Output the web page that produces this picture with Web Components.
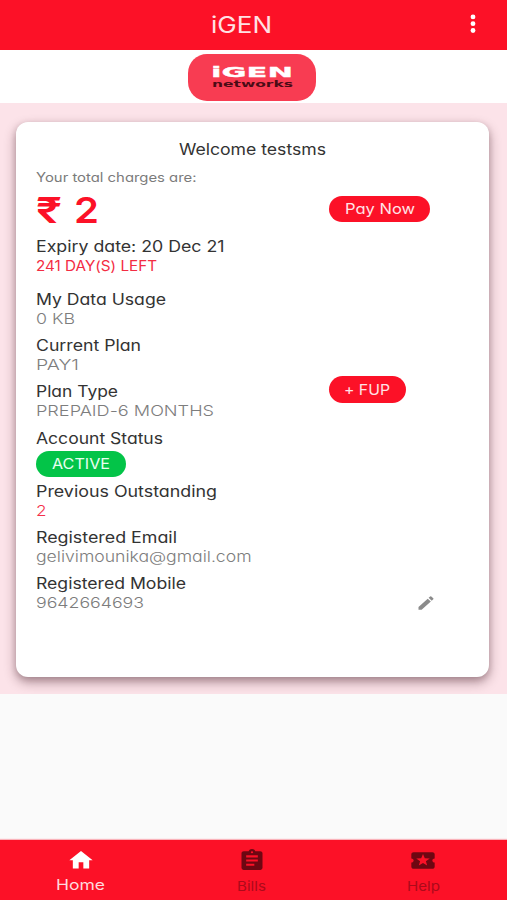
<!DOCTYPE html>
<html lang="en">
<head>
<meta charset="utf-8">
<title>iGEN</title>
<style>
html,body{margin:0;height:100%}
body{font-family:Inter,"Open Sans","Liberation Sans",sans-serif;font-feature-settings:"cv11" 1,"calt" 0;background:#fafafa;color:#333;overflow:hidden}
</style>
</head>
<body>
<igen-app></igen-app>
<script>
const define = (name, html, init) => customElements.define(name, class extends HTMLElement {
  connectedCallback() {
    if (this.shadowRoot) return;
    const root = this.attachShadow({mode: 'open'});
    root.innerHTML = html;
    if (init) init(this, root);
  }
});

/* One line of text widened to the width given in "w" */
define('wide-text', `<style>
:host{display:block;white-space:nowrap;line-height:19px;height:19px;font-size:15.4px}
span{display:inline-block;transform-origin:0 50%}
</style><span><slot></slot></span>`, (el, root) => {
  const w = +el.getAttribute('w');
  el.style.width = w + 'px';
  const s = root.querySelector('span');
  s.style.transform = `scaleX(${w / s.getBoundingClientRect().width})`;
});

define('pill-label', `<style>
:host{display:flex;align-items:center;justify-content:center;box-sizing:border-box;border-radius:14px;background:#fc1127;color:#ffe3e6}
</style><slot></slot>`);

define('info-field', `<style>
:host{display:block;margin-bottom:7.25px;color:#333}
.v{color:var(--value,#7d7d7d);font-weight:300;padding-top:1px}
::slotted([slot=value]){font-size:14.8px}
</style><slot></slot><div class="v"><slot name="value"></slot></div>`);

define('app-header', `<style>
:host{display:flex;align-items:center;height:50px;background:#fc1127;color:#ffe1e4;box-sizing:border-box;padding:0 29px 2px 211px;justify-content:space-between}
wide-text{font-size:22.5px}
svg{display:block}
</style><wide-text w="61">iGEN</wide-text>
<svg width="10" height="20" viewBox="0 0 10 20" fill="#fff"><circle cx="5" cy="2.9" r="2.4"/><circle cx="5" cy="9.7" r="2.4"/><circle cx="5" cy="16.5" r="2.4"/></svg>`);

define('brand-banner', `<style>
:host{display:flex;height:53px;background:#fff;box-sizing:border-box;padding:4px 0 2px 188px}
.logo{width:128px;height:47px;border-radius:19px;background:#f83c52;display:flex;flex-direction:column;align-items:center;box-sizing:border-box;padding-top:11px}
wide-text{font-family:"DejaVu Sans",sans-serif;font-weight:700}
.a{font-size:14.5px;height:15px;line-height:15px;color:#fff;-webkit-text-stroke:.3px #fff}
.b{font-size:8.5px;height:8px;line-height:8px;color:#4b0b15}
</style><div class="logo"><wide-text class="a" w="82">iGEN</wide-text><wide-text class="b" w="81">networks</wide-text></div>`);

define('account-card', `<style>
:host{display:block;width:472.5px;height:554.5px;box-sizing:border-box;border-radius:12px;background:#fff;box-shadow:0 5px 12px rgba(60,20,30,.42),0 2px 6px rgba(60,20,30,.14);padding:17.5px 20px 0}
.welcome{margin-left:142.5px}
.cols{display:grid;grid-template-columns:293px 1fr;margin-top:9px}
.charges{font-size:12.6px;color:#7b7b7b}
.total{display:flex;justify-content:space-between;width:63px;height:38px;margin-top:4px;color:#fc1127}
.total wide-text{font-size:36px;font-weight:600;height:38px;line-height:38px}
.exp{margin-top:8.7px}
.left{font-size:13.8px;color:#f32c43;margin-top:.7px;margin-bottom:14.1px}
.state{margin:3.5px 0 4.8px;width:89.5px;height:25.5px;background:#03c448;color:#e8fff0}
.state wide-text,.pay wide-text,.fup wide-text{font-size:14.6px;padding-top:1px}
.side{display:flex;flex-direction:column;align-items:flex-start}
.pay{width:101px;height:26.5px;margin-top:28px}
.fup{width:76.5px;height:27px;margin-top:154px}
.side svg{margin:190.5px 0 0 87px;display:block}
</style>
<wide-text class="welcome" w="147">Welcome testsms</wide-text>
<div class="cols"><div>
<wide-text class="charges" w="160.5">Your total charges are:</wide-text>
<div class="total"><wide-text w="26">₹</wide-text><wide-text w="25">2</wide-text></div>
<wide-text class="exp" w="188.5">Expiry date: 20 Dec 21</wide-text>
<wide-text class="left" w="121">241 DAY(S) LEFT</wide-text>
<info-field><wide-text w="130">My Data Usage</wide-text><wide-text slot="value" w="39">0 KB</wide-text></info-field>
<info-field><wide-text w="105">Current Plan</wide-text><wide-text slot="value" w="43">PAY1</wide-text></info-field>
<info-field><wide-text w="82">Plan Type</wide-text><wide-text slot="value" w="178">PREPAID-6 MONTHS</wide-text></info-field>
<wide-text w="127">Account Status</wide-text>
<pill-label class="state"><wide-text w="58">ACTIVE</wide-text></pill-label>
<info-field style="--value:#f4304a"><wide-text w="181">Previous Outstanding</wide-text><wide-text slot="value" w="10.5">2</wide-text></info-field>
<info-field><wide-text w="141">Registered Email</wide-text><wide-text slot="value" w="215.5">gelivimounika@gmail.com</wide-text></info-field>
<info-field><wide-text w="150">Registered Mobile</wide-text><wide-text slot="value" w="108">9642664693</wide-text></info-field>
</div><div class="side">
<pill-label class="pay"><wide-text w="70">Pay Now</wide-text></pill-label>
<pill-label class="fup"><wide-text w="46">+ FUP</wide-text></pill-label>
<svg width="20" height="18" viewBox="0 0 24 24" preserveAspectRatio="none" fill="#8b8b8b"><path d="M3 17.25V21h3.75L17.81 9.94l-3.75-3.75L3 17.25zM20.71 7.04a1 1 0 0 0 0-1.41l-2.34-2.34a1 1 0 0 0-1.41 0l-1.83 1.83 3.75 3.75 1.83-1.83z"/></svg>
</div></div>`);

define('nav-item', `<style>
:host{display:flex;flex-direction:column;align-items:center;color:#ac0a1a;font-size:13px;padding-top:8px;box-sizing:border-box;height:60px}
:host([active]){color:#ffd9dd}
</style><slot name="icon"></slot><slot></slot>`);

define('bottom-nav', `<style>
:host{display:grid;grid-template-columns:161px 181px 162px;height:60px;background:#fc1127;box-shadow:0 -1px 1px rgba(252,17,39,.3)}
svg{display:block;height:25px;width:28px}
nav-item wide-text{font-size:13px;margin-top:4px}
nav-item[active] svg{height:24.5px}
nav-item[active] wide-text{font-size:14.5px;margin-top:2.5px}
</style>
<nav-item active><svg slot="icon" viewBox="0 0 24 24" preserveAspectRatio="none" fill="#fff"><path d="M10 20v-6h4v6h5v-8h3L12 3 2 12h3v8z"/></svg><wide-text w="49">Home</wide-text></nav-item>
<nav-item><svg slot="icon" viewBox="0 0 24 24" preserveAspectRatio="none" fill="#6e0712"><path d="M19 3h-4.18C14.4 1.84 13.3 1 12 1s-2.4.84-2.82 2H5c-1.1 0-2 .9-2 2v14c0 1.1.9 2 2 2h14c1.1 0 2-.9 2-2V5c0-1.1-.9-2-2-2zm-7 0a1 1 0 1 1 0 2 1 1 0 0 1 0-2zm2 14H7v-2h7v2zm3-4H7v-2h10v2zm0-4H7V7h10v2z"/></svg><wide-text w="29">Bills</wide-text></nav-item>
<nav-item><svg slot="icon" viewBox="0 0 24 24" preserveAspectRatio="none" fill="#6e0712"><path d="M20 12c0-1.1.9-2 2-2V6c0-1.1-.9-2-2-2H4c-1.1 0-2 .9-2 2v4c1.1 0 2 .9 2 2s-.9 2-2 2v4c0 1.1.9 2 2 2h16c1.1 0 2-.9 2-2v-4c-1.1 0-2-.9-2-2zm-4.42 4.8L12 14.5l-3.58 2.3 1.08-4.12-3.29-2.69 4.24-.25L12 5.8l1.54 3.95 4.24.25-3.29 2.69 1.09 4.11z"/></svg><wide-text w="33">Help</wide-text></nav-item>`);

define('igen-app', `<style>
:host{display:flex;flex-direction:column;width:507px;height:900px}
.stage{height:590.5px;background:#fce3e9;box-sizing:border-box;padding:19px 0 0 16px;overflow:hidden}
bottom-nav{margin-top:auto}
</style><app-header></app-header><brand-banner></brand-banner><div class="stage"><account-card></account-card></div><bottom-nav></bottom-nav>`);
</script>
</body>
</html>
